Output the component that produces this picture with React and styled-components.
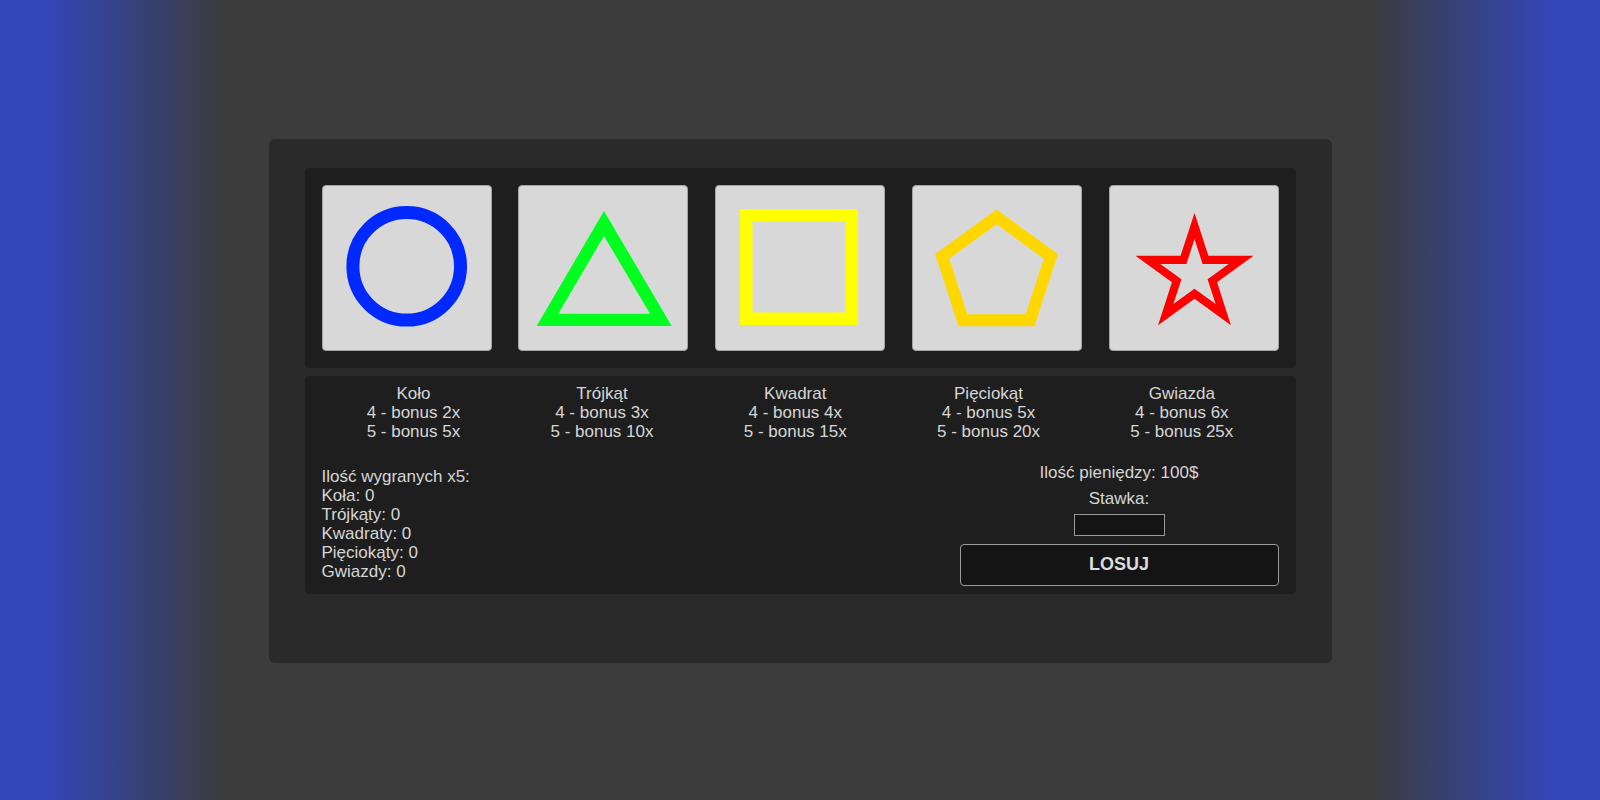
import React from "react";
import styled, { createGlobalStyle } from "styled-components";

const GlobalStyle = createGlobalStyle`
  html, body {
    margin: 0;
    padding: 0;
  }
  body {
    font-family: "Liberation Sans", Arial, sans-serif;
    background: linear-gradient(
      90deg,
      #3346b9 2.8%,
      #3c3c3c 14.2%,
      #3c3c3c 85.6%,
      #3346b9 97%
    );
    color: #d6d6d6;
  }
`;

// regular polygon / star helpers for the svg shapes
const polyPoints = (cx, cy, r, n, rot = -90) =>
  Array.from({ length: n }, (_, i) => {
    const a = ((rot + (360 / n) * i) * Math.PI) / 180;
    return [cx + r * Math.cos(a), cy + r * Math.sin(a)];
  });

const starPoints = (cx, cy, R, r) =>
  Array.from({ length: 10 }, (_, i) => {
    const a = ((-90 + 36 * i) * Math.PI) / 180;
    const rad = i % 2 === 0 ? R : r;
    return [cx + rad * Math.cos(a), cy + rad * Math.sin(a)];
  });

const toPath = (pts) =>
  "M" + pts.map(([x, y]) => `${x.toFixed(2)} ${y.toFixed(2)}`).join(" L") + " Z";

const Circle = () => (
  <svg width="150" height="150" viewBox="0 0 150 150">
    <circle cx="74.7" cy="73.3" r="53.8" fill="none" stroke="#0029ff" strokeWidth="13" />
  </svg>
);

const Triangle = () => (
  <svg width="150" height="150" viewBox="0 0 150 150">
    <path
      fillRule="evenodd"
      fill="#00ff1f"
      d="M76 18 L143.7 133 L8.7 133 Z M76 43 L122 120.7 L30.3 120.7 Z"
    />
  </svg>
);

const Square = () => (
  <svg width="150" height="150" viewBox="0 0 150 150">
    <rect x="21.25" y="22.25" width="105.5" height="103.5" fill="none" stroke="#ffff00" strokeWidth="12.5" />
  </svg>
);

const Pentagon = () => (
  <svg width="150" height="150" viewBox="0 0 150 150">
    <path
      fillRule="evenodd"
      fill="#ffd700"
      d={toPath(polyPoints(74.5, 81, 64.5, 5)) + " " + toPath(polyPoints(74.5, 81, 49.7, 5))}
    />
  </svg>
);

const Star = () => (
  <svg width="150" height="150" viewBox="0 0 150 150">
    <path
      fillRule="evenodd"
      fill="#ff0000"
      d={toPath(starPoints(75.5, 82, 62, 23.7)) + " " + toPath(starPoints(75.5, 82, 36, 13.75))}
    />
  </svg>
);

const symbols = [
  { name: "Koło", four: 2, five: 5, Shape: Circle },
  { name: "Trójkąt", four: 3, five: 10, Shape: Triangle },
  { name: "Kwadrat", four: 4, five: 15, Shape: Square },
  { name: "Pięciokąt", four: 5, five: 20, Shape: Pentagon },
  { name: "Gwiazda", four: 6, five: 25, Shape: Star },
];

const wins = [
  ["Koła", 0],
  ["Trójkąty", 0],
  ["Kwadraty", 0],
  ["Pięciokąty", 0],
  ["Gwiazdy", 0],
];

const App = () => {
  return (
    <>
      <GlobalStyle />
      <Page>
        <Machine>
          <Reels>
            {symbols.map(({ name, Shape }) => (
              <Tile key={name}>
                <Shape />
              </Tile>
            ))}
          </Reels>

          <Info>
            <Paytable>
              {symbols.map((s) => (
                <PayItem key={s.name}>
                  <div>{s.name}</div>
                  <div>4 - bonus {s.four}x</div>
                  <div>5 - bonus {s.five}x</div>
                </PayItem>
              ))}
            </Paytable>

            <BottomRow>
              <Stats>
                <div>Ilość wygranych x5:</div>
                {wins.map(([label, n]) => (
                  <div key={label}>
                    {label}: {n}
                  </div>
                ))}
              </Stats>
              <div />
              <Controls>
                <Money>Ilość pieniędzy: 100$</Money>
                <StakeLabel>Stawka:</StakeLabel>
                <StakeInput type="text" />
                <SpinButton>LOSUJ</SpinButton>
              </Controls>
            </BottomRow>
          </Info>
        </Machine>
      </Page>
    </>
  );
};

const Page = styled.div`
  height: 100vh;
  display: flex;
  justify-content: center;
  align-items: center;
`;

const Machine = styled.div`
  box-sizing: border-box;
  width: 1063px;
  height: 524px;
  margin-top: 1px;
  padding: 29px 36px;
  background: #2a2a2a;
  border-radius: 6px;
  display: flex;
  flex-direction: column;
  gap: 8px;
`;

const Reels = styled.div`
  display: flex;
  justify-content: space-between;
  padding: 17px;
  background: #1e1e1e;
  border-radius: 4px;
`;

const Tile = styled.div`
  box-sizing: border-box;
  width: 170px;
  height: 166px;
  background: #d8d8d8;
  border: 1px solid #a4a4a4;
  border-radius: 4px;
  display: flex;
  justify-content: center;
  align-items: center;

  svg {
    flex-shrink: 0;
  }
`;

const Info = styled.div`
  padding: 8px 17px;
  background: #1e1e1e;
  border-radius: 4px;
  font-size: 17px;
  line-height: 19px;
`;

const Paytable = styled.div`
  display: flex;
  justify-content: space-around;
  text-align: center;
`;

const PayItem = styled.div`
  white-space: nowrap;
`;

const BottomRow = styled.div`
  display: grid;
  grid-template-columns: 1fr 1fr 1fr;
  align-items: center;
  margin-top: 22px;
`;

const Stats = styled.div`
  text-align: left;
`;

const Controls = styled.div`
  display: flex;
  flex-direction: column;
  align-items: center;
`;

const Money = styled.div`
  margin-bottom: 7px;
`;

const StakeLabel = styled.div`
  margin-bottom: 6px;
`;

const StakeInput = styled.input`
  box-sizing: border-box;
  width: 91px;
  height: 22px;
  margin: 0 0 8px;
  padding: 0 4px;
  background: #141414;
  border: 1px solid #9a9a9a;
  color: #d6d6d6;
  font-family: inherit;
  font-size: 14px;
  outline: none;
`;

const SpinButton = styled.button`
  box-sizing: border-box;
  width: 100%;
  height: 42px;
  background: #141414;
  border: 1px solid #9a9a9a;
  border-radius: 4px;
  color: #dcdcdc;
  font-family: "Liberation Sans", Arial, sans-serif;
  font-size: 18px;
  font-weight: bold;
  cursor: pointer;
`;

export default App;
